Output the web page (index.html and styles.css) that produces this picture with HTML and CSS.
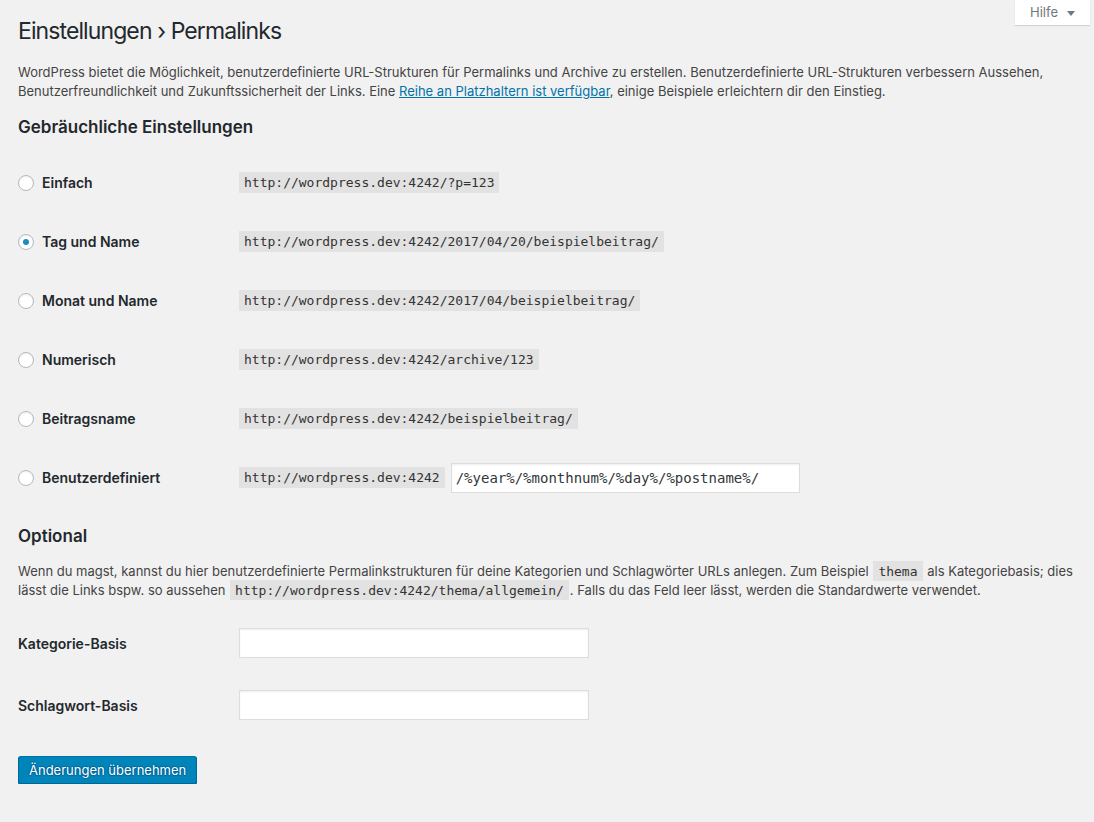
FILE: index.html
```html
<!DOCTYPE html>
<html lang="de">
<head>
<meta charset="utf-8">
<title>Permalinks</title>
<link rel="stylesheet" href="styles.css">
</head>
<body>
<div class="help-tab"><span class="help-label">Hilfe</span><span class="help-arrow"></span></div>
<div class="wrap">
  <h1 class="page-title">Einstellungen › Permalinks</h1>
  <p class="intro">WordPress bietet die Möglichkeit, benutzerdefinierte URL-Strukturen für Permalinks und Archive zu erstellen. Benutzerdefinierte URL-Strukturen verbessern Aussehen, Benutzerfreundlichkeit und Zukunftssicherheit der Links. Eine <a href="#" class="link">Reihe an Platzhaltern ist verfügbar</a>, einige Beispiele erleichtern dir den Einstieg.</p>

  <h2 class="section-title">Gebräuchliche Einstellungen</h2>
  <div class="options">
    <div class="option-row">
      <label class="option-label"><input type="radio" name="pl" class="radio"><span>Einfach</span></label>
      <div class="option-value"><code class="code">http://wordpress.dev:4242/?p=123</code></div>
    </div>
    <div class="option-row">
      <label class="option-label"><input type="radio" name="pl" class="radio" checked><span>Tag und Name</span></label>
      <div class="option-value"><code class="code">http://wordpress.dev:4242/2017/04/20/beispielbeitrag/</code></div>
    </div>
    <div class="option-row">
      <label class="option-label"><input type="radio" name="pl" class="radio"><span>Monat und Name</span></label>
      <div class="option-value"><code class="code">http://wordpress.dev:4242/2017/04/beispielbeitrag/</code></div>
    </div>
    <div class="option-row">
      <label class="option-label"><input type="radio" name="pl" class="radio"><span>Numerisch</span></label>
      <div class="option-value"><code class="code">http://wordpress.dev:4242/archive/123</code></div>
    </div>
    <div class="option-row">
      <label class="option-label"><input type="radio" name="pl" class="radio"><span>Beitragsname</span></label>
      <div class="option-value"><code class="code">http://wordpress.dev:4242/beispielbeitrag/</code></div>
    </div>
    <div class="option-row">
      <label class="option-label"><input type="radio" name="pl" class="radio"><span>Benutzerdefiniert</span></label>
      <div class="option-value"><code class="code">http://wordpress.dev:4242</code><input type="text" class="custom-input" value="/%year%/%monthnum%/%day%/%postname%/"></div>
    </div>
  </div>

  <h2 class="section-title optional-title">Optional</h2>
  <p class="optional-text">Wenn du magst, kannst du hier benutzerdefinierte Permalinkstrukturen für deine Kategorien und Schlagwörter URLs anlegen. Zum Beispiel <code class="code code-inline">thema</code> als Kategoriebasis; dies lässt die Links bspw. so aussehen <code class="code code-inline">http://wordpress.dev:4242/thema/allgemein/</code>. Falls du das Feld leer lässt, werden die Standardwerte verwendet.</p>

  <div class="base-rows">
    <div class="base-row">
      <label class="base-label">Kategorie-Basis</label>
      <input type="text" class="text-input">
    </div>
    <div class="base-row">
      <label class="base-label">Schlagwort-Basis</label>
      <input type="text" class="text-input">
    </div>
  </div>

  <button class="primary-button">Änderungen übernehmen</button>
</div>
</body>
</html>
```

FILE: styles.css
```css
html, body {
  margin: 0;
  padding: 0;
}
body {
  background: #f1f1f1;
  color: #444;
  font-family: "Inter", "Roboto", "Liberation Sans", sans-serif;
  font-size: 13px;
  line-height: 19px;
}

.help-tab {
  float: right;
  margin-right: 4px;
  width: 75px;
  height: 25px;
  background: #fff;
  box-shadow: 0 1px 1px rgba(0,0,0,0.12);
  display: flex;
  align-items: center;
  justify-content: center;
  gap: 9px;
  color: #72777c;
  font-size: 13px;
}
.help-label {
  line-height: 25px;
}
.help-arrow {
  width: 0;
  height: 0;
  border-left: 4px solid transparent;
  border-right: 4px solid transparent;
  border-top: 5px solid #72777c;
  margin-top: 1px;
}

.wrap {
  padding: 0 16px 0 18px;
}

.page-title {
  margin: 0;
  padding-top: 17px;
  font-size: 23px;
  font-weight: 400;
  line-height: 29px;
  letter-spacing: -0.9px;
  color: #23282d;
}

.intro {
  margin: 17px 0 0;
}
.link {
  color: #0073aa;
  text-decoration: underline;
}

.section-title {
  margin: 15px 0 0;
  font-size: 17px;
  font-weight: 600;
  line-height: 22px;
  color: #23282d;
}

.options {
  margin-top: 15px;
}
.option-row {
  display: flex;
  align-items: center;
  height: 59px;
}
.option-label {
  width: 221px;
  flex: none;
  display: flex;
  align-items: center;
  font-size: 14px;
  font-weight: 600;
  color: #23282d;
}
.radio {
  -webkit-appearance: none;
  appearance: none;
  width: 16px;
  height: 16px;
  margin: 0 8px 0 0;
  border: 1px solid #b4b9be;
  border-radius: 50%;
  background: #fff;
  box-shadow: inset 0 1px 2px rgba(0,0,0,0.07);
  box-sizing: border-box;
  display: flex;
  align-items: center;
  justify-content: center;
  flex: none;
}
.radio:checked::before {
  content: "";
  width: 6px;
  height: 6px;
  border-radius: 50%;
  background: #1e8cbe;
}
.option-value {
  display: flex;
  align-items: center;
}
.code {
  font-family: "DejaVu Sans Mono", "Liberation Mono", monospace;
  font-size: 13px;
  line-height: 16px;
  background: #e2e2e2;
  padding: 3px 5px 2px;
  color: #333;
}
.custom-input {
  margin-left: 6px;
  width: 349px;
  height: 30px;
  box-sizing: border-box;
  border: 1px solid #ddd;
  box-shadow: inset 0 1px 2px rgba(0,0,0,0.07);
  background: #fff;
  padding: 3px 4px;
  font-family: "DejaVu Sans Mono", "Liberation Mono", monospace;
  font-size: 14px;
  color: #32373c;
}

.optional-title {
  margin-top: 18px;
}
.optional-text {
  margin: 15px 0 0;
}
.code-inline {
  padding: 3px 5px 2px;
  margin: 0 1px;
}

.base-rows {
  margin-top: 12px;
}
.base-row {
  display: flex;
  align-items: center;
  height: 62px;
}
.base-label {
  width: 221px;
  flex: none;
  font-size: 14px;
  font-weight: 600;
  color: #23282d;
}
.text-input {
  width: 350px;
  height: 30px;
  box-sizing: border-box;
  border: 1px solid #ddd;
  box-shadow: inset 0 1px 2px rgba(0,0,0,0.07);
  background: #fff;
  margin: 0;
}

.primary-button {
  margin-top: 20px;
  height: 28px;
  padding: 0 10px 1px;
  background: #0085ba;
  border: 1px solid;
  border-color: #0073aa #006799 #006799;
  border-radius: 3px;
  box-shadow: 0 1px 0 #006799;
  color: #fff;
  font-family: "Inter", "Roboto", "Liberation Sans", sans-serif;
  font-size: 13px;
  text-shadow: 0 -1px 1px #006799, 1px 0 1px #006799, 0 1px 1px #006799, -1px 0 1px #006799;
  cursor: pointer;
}
```
